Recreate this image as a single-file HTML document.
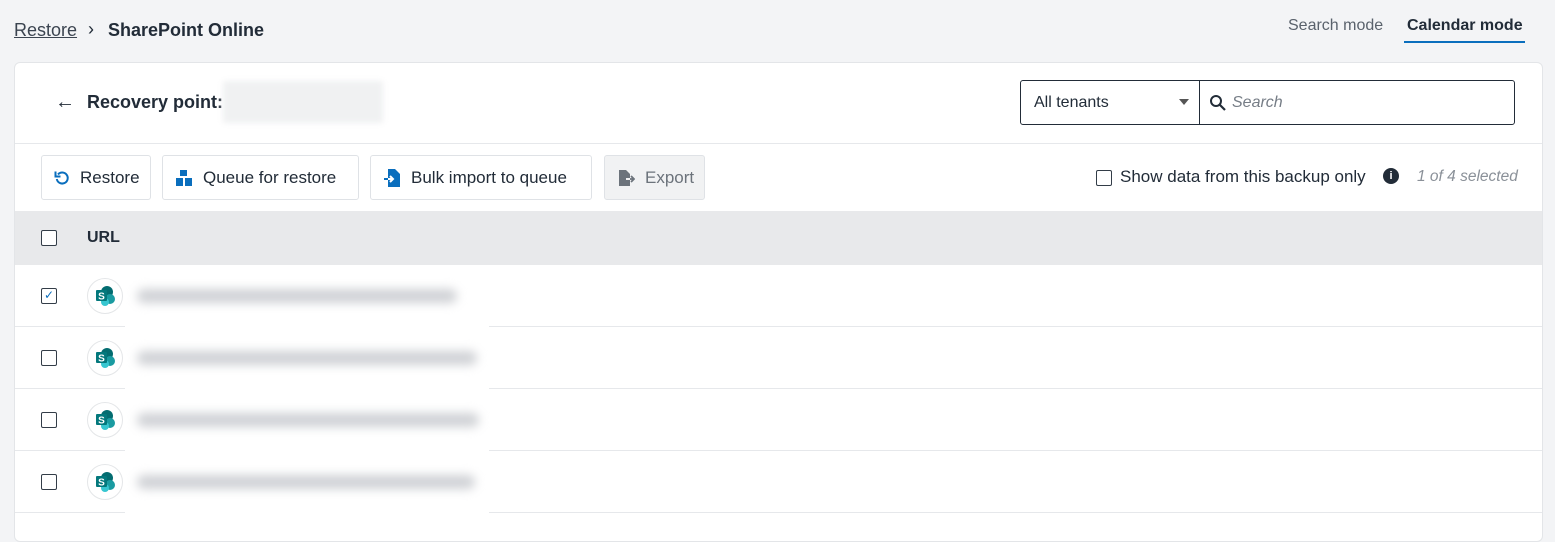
<!DOCTYPE html>
<html><head><style>
*{box-sizing:border-box;margin:0;padding:0}
body{width:1555px;height:533px;background:#f3f4f6;font-family:"Liberation Sans",sans-serif;color:#222c38;position:relative;overflow:hidden}
.abs{position:absolute}
.card{position:absolute;left:14px;top:62px;width:1529px;height:480px;background:#fff;border:1px solid #e3e5e8;border-radius:6px;overflow:hidden}
.btn{position:absolute;top:92px;height:45px;border:1px solid #dfe2e6;border-radius:3px;background:#fff;font-size:17px;display:flex;align-items:center;padding-left:12px;gap:10px}
.cb{position:absolute;width:16px;height:16px;border:1.5px solid #333d48;border-radius:2px;background:#fff}
.row{position:absolute;left:0;width:1529px;height:62px;border-bottom:1px solid #e6e8eb}
.sp{position:absolute;left:72px;width:36px;height:36px;border-radius:50%;border:1px solid #e4e6e8;background:#fff}
.blur{position:absolute;left:122px;height:14px;border-radius:7px;background:#cfd1d5;filter:blur(5px)}
</style></head><body>
<div class="abs" style="left:14px;top:20px;font-size:18px;color:#3b4450;text-decoration:underline">Restore</div>
<div class="abs" style="left:88px;top:19px;font-size:18px">&#8250;</div>
<div class="abs" style="left:108px;top:20px;font-size:18px;font-weight:bold">SharePoint Online</div>
<div class="abs" style="left:1288px;top:17px;font-size:16px;color:#5a626c">Search mode</div>
<div class="abs" style="left:1407px;top:17px;font-size:16px;font-weight:bold">Calendar mode</div>
<div class="abs" style="left:1404px;top:41px;width:121px;height:2px;background:#0a6ebd"></div>
<div class="card">
 <div class="abs" style="left:40px;top:28px;font-size:20px">&#8592;</div>
 <div class="abs" style="left:72px;top:29px;font-size:18px;font-weight:bold">Recovery point:</div>
 <div class="abs" style="left:208px;top:18px;width:160px;height:42px;background:#f0f1f2;filter:blur(3px)"></div>
 <div class="abs" style="left:1005px;top:17px;width:180px;height:45px;border:1px solid #222c38;border-radius:3px 0 0 3px;font-size:16px;padding:13px 13px">All tenants<span style="position:absolute;right:10px;top:18px;border:5px solid transparent;border-top:6px solid #555"></span></div>
 <div class="abs" style="left:1184px;top:17px;width:316px;height:45px;border:1px solid #222c38;border-radius:0 3px 3px 0;font-size:16px;padding:13px 0 0 32px;color:#767d86;font-style:italic">Search
  <svg class="abs" style="left:9px;top:13px" width="18" height="18" viewBox="0 0 18 18"><circle cx="7" cy="7" r="5" fill="none" stroke="#222c38" stroke-width="2"/><path d="M11 11l5 5" stroke="#222c38" stroke-width="2.2"/></svg></div>
 <div class="abs" style="left:0;top:80px;width:1529px;height:1px;background:#e6e8eb"></div>
 <div class="btn" style="left:26px;width:110px"><svg width="16" height="16" viewBox="0 0 16 16"><path d="M4 4.5A5.5 5.5 0 1 1 2.8 9" fill="none" stroke="#0a6ebd" stroke-width="2"/><path d="M1.5 1.5v5h5" fill="none" stroke="#0a6ebd" stroke-width="2"/></svg>Restore</div>
 <div class="btn" style="left:147px;width:197px"><svg width="18" height="18" viewBox="0 0 18 18" fill="#0a6ebd"><rect x="5" y="1" width="7" height="6"/><rect x="1" y="9" width="7" height="8"/><rect x="10" y="9" width="7" height="8"/></svg>Queue for restore</div>
 <div class="btn" style="left:355px;width:222px"><svg width="18" height="20" viewBox="0 0 18 20"><path d="M5 1h7l5 5v13H5z" fill="#0a6ebd"/><path d="M1 11h9m-3-3l3 3-3 3" stroke="#0a6ebd" stroke-width="2" fill="none"/><path d="M5 11h5m-3-3l3 3-3 3" stroke="#fff" stroke-width="2" fill="none"/></svg>Bulk import to queue</div>
 <div class="btn" style="left:589px;width:101px;background:#f1f2f3;color:#6c737b"><svg width="18" height="18" viewBox="0 0 18 18"><path d="M2 1h7l4 4v12H2z" fill="#6c737b"/><path d="M9 10h8m-3-3l3 3-3 3" stroke="#6c737b" stroke-width="1.8" fill="none"/><path d="M9 10h4" stroke="#fff" stroke-width="1.8"/></svg>Export</div>
 <div class="cb" style="left:1081px;top:107px"></div>
 <div class="abs" style="left:1105px;top:104px;font-size:17px">Show data from this backup only</div>
 <div class="abs" style="left:1368px;top:105px;width:16px;height:16px;border-radius:50%;background:#222c38;color:#fff;font-size:11px;font-weight:bold;text-align:center;line-height:16px">i</div>
 <div class="abs" style="left:1402px;top:105px;font-size:15.5px;font-style:italic;color:#8a9098">1 of 4 selected</div>
 <div class="abs" style="left:0;top:148px;width:1529px;height:54px;background:#e8e9eb"></div>
 <div class="cb" style="left:26px;top:167px"></div>
 <div class="abs" style="left:72px;top:166px;font-size:16px;font-weight:bold">URL</div>
 <div class="row" style="top:202px"></div><div class="row" style="top:264px"></div><div class="row" style="top:326px"></div><div class="row" style="top:388px"></div>
 <div class="abs" style="left:110px;top:202px;width:364px;height:290px;background:#fff"></div>
 <div class="cb" style="left:26px;top:225px;font-size:12px;color:#0a6ebd;line-height:12px;text-align:center">&#10003;</div>
 <div class="cb" style="left:26px;top:287px"></div><div class="cb" style="left:26px;top:349px"></div><div class="cb" style="left:26px;top:411px"></div>
 <div class="sp" style="top:215px"></div><div class="sp" style="top:277px"></div><div class="sp" style="top:339px"></div><div class="sp" style="top:401px"></div>
 <svg class="abs" style="left:79px;top:222px" width="22" height="22" viewBox="0 0 22 22"><circle cx="13" cy="7" r="6" fill="#036c70"/><circle cx="16" cy="14" r="5" fill="#1a9ba1"/><circle cx="11" cy="17" r="4" fill="#37c6d0"/><rect x="2" y="5" width="11" height="11" rx="1" fill="#03787c"/><text x="7.5" y="14.5" font-size="10" font-weight="bold" fill="#fff" text-anchor="middle" font-family="Liberation Sans">S</text></svg>
 <svg class="abs" style="left:79px;top:284px" width="22" height="22" viewBox="0 0 22 22"><circle cx="13" cy="7" r="6" fill="#036c70"/><circle cx="16" cy="14" r="5" fill="#1a9ba1"/><circle cx="11" cy="17" r="4" fill="#37c6d0"/><rect x="2" y="5" width="11" height="11" rx="1" fill="#03787c"/><text x="7.5" y="14.5" font-size="10" font-weight="bold" fill="#fff" text-anchor="middle" font-family="Liberation Sans">S</text></svg>
 <svg class="abs" style="left:79px;top:346px" width="22" height="22" viewBox="0 0 22 22"><circle cx="13" cy="7" r="6" fill="#036c70"/><circle cx="16" cy="14" r="5" fill="#1a9ba1"/><circle cx="11" cy="17" r="4" fill="#37c6d0"/><rect x="2" y="5" width="11" height="11" rx="1" fill="#03787c"/><text x="7.5" y="14.5" font-size="10" font-weight="bold" fill="#fff" text-anchor="middle" font-family="Liberation Sans">S</text></svg>
 <svg class="abs" style="left:79px;top:408px" width="22" height="22" viewBox="0 0 22 22"><circle cx="13" cy="7" r="6" fill="#036c70"/><circle cx="16" cy="14" r="5" fill="#1a9ba1"/><circle cx="11" cy="17" r="4" fill="#37c6d0"/><rect x="2" y="5" width="11" height="11" rx="1" fill="#03787c"/><text x="7.5" y="14.5" font-size="10" font-weight="bold" fill="#fff" text-anchor="middle" font-family="Liberation Sans">S</text></svg>
 <div class="blur" style="top:226px;width:320px"></div>
 <div class="blur" style="top:288px;width:340px"></div>
 <div class="blur" style="top:350px;width:342px"></div>
 <div class="blur" style="top:412px;width:338px"></div>
</div>
</body></html>
